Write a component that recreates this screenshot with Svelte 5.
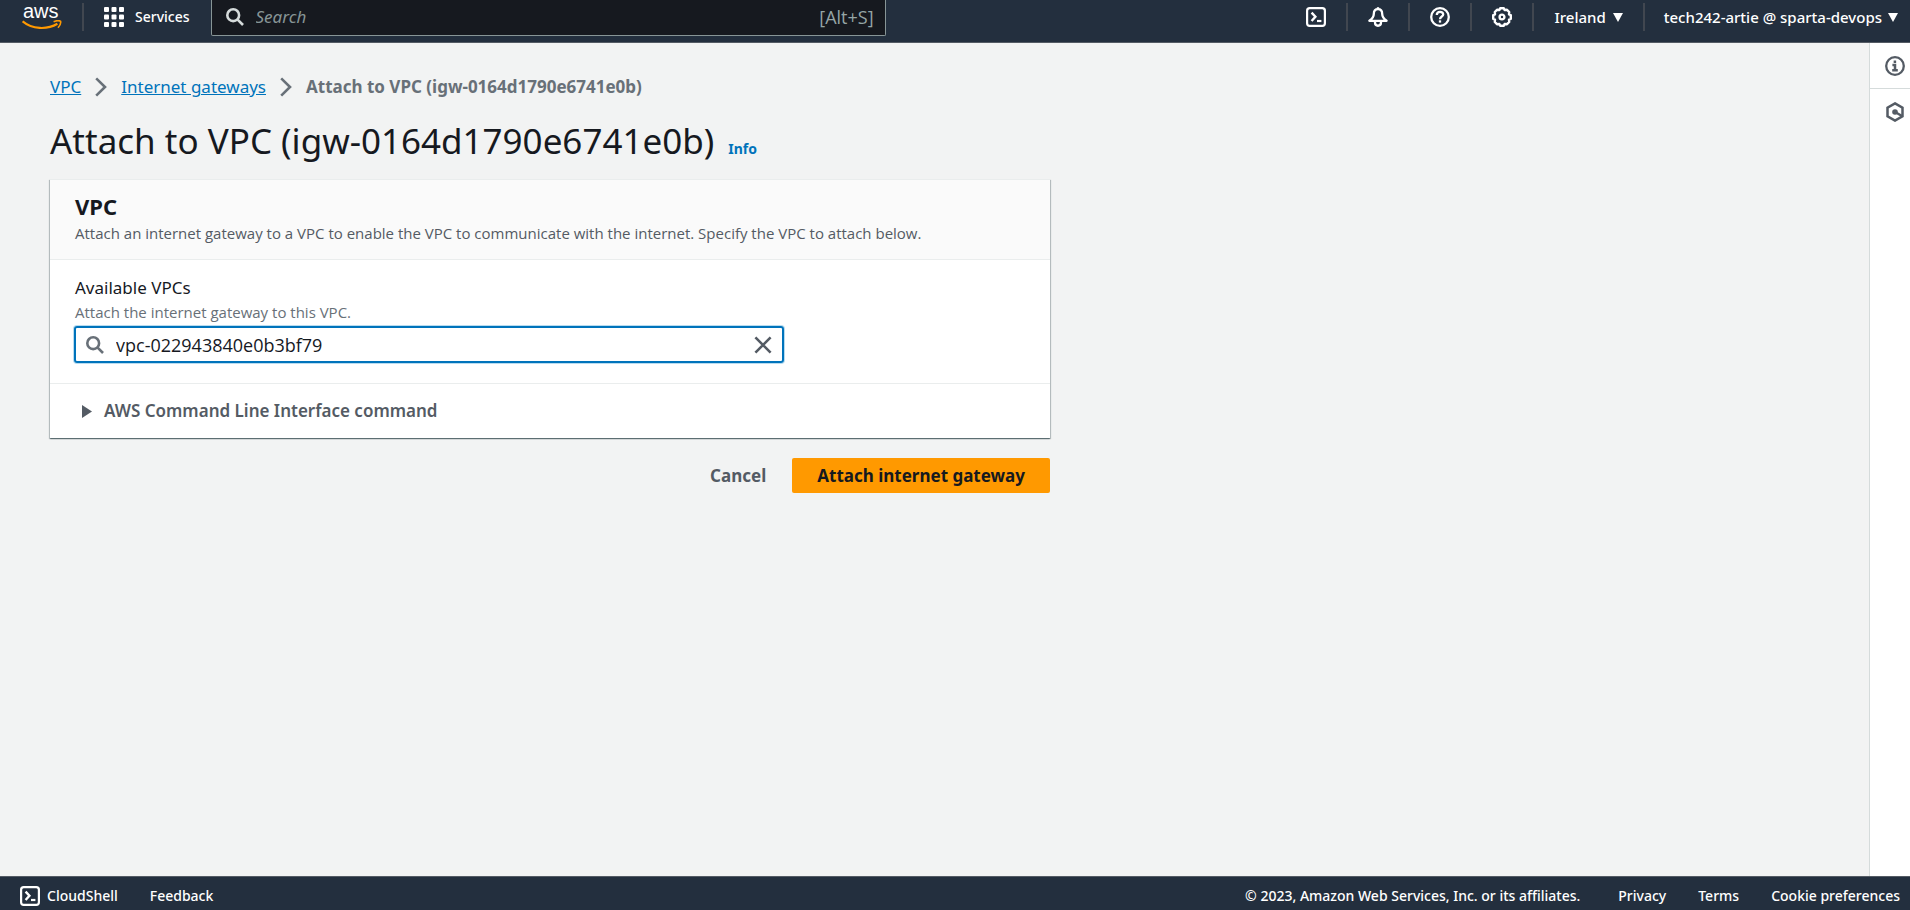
<script>
  let vpc = $state('vpc-022943840e0b3bf79');
</script>

{#snippet shell()}
  <svg class="ic" viewBox="0 0 20 20" width="20" height="20" fill="none" stroke="currentColor" stroke-width="2.2" aria-hidden="true">
    <rect x="1.1" y="1.1" width="17.8" height="17.8" rx="2.6" />
    <path d="M5.6 5.6 L9.4 9.8 L5.6 14" stroke-width="2.4" />
    <path d="M11 14 H15.4" />
  </svg>
{/snippet}

{#snippet lens()}
  <svg class="ic" viewBox="0 0 18 18" width="18" height="18" fill="none" stroke="currentColor" stroke-width="2.6" aria-hidden="true">
    <circle cx="7.2" cy="7.2" r="5.9" />
    <path d="M11.4 11.4 L17 17" />
  </svg>
{/snippet}

{#snippet chevron()}
  <svg class="ic" viewBox="0 0 12 20" width="12" height="20" fill="none" stroke="#687078" stroke-width="2.6" aria-hidden="true">
    <path d="M1.2 1.4 L10 10 L1.2 18.6" />
  </svg>
{/snippet}

{#snippet caret()}
  <svg class="ic" viewBox="0 0 10 9" width="10" height="9" fill="currentColor" aria-hidden="true"><path d="M0 0 H10 L5 9 Z" /></svg>
{/snippet}

<div class="page">
  <header>
    <a class="logo" href="#home" aria-label="AWS home">
      <span>aws</span>
      <svg viewBox="0 0 40 10" width="40" height="10" fill="none" stroke="#f90" aria-hidden="true">
        <path d="M0.6 1.4 C10 9.4 25 10 35.4 3.8" stroke-width="2.2" />
        <path d="M31.6 1.7 C34.4 0.5 37.6 0.6 38.6 1.3 C39 2.8 38 5.6 36 7.8" stroke-width="1.6" />
      </svg>
    </a>
    <button class="services">
      <svg viewBox="0 0 20 20" width="20" height="20" fill="#fff" aria-hidden="true">
        {#each [0, 7.5, 15] as y}
          {#each [0, 7.5, 15] as x}
            <rect {x} {y} width="5" height="5" rx="1" />
          {/each}
        {/each}
      </svg>
      Services
    </button>
    <label class="search">
      {@render lens()}
      <input type="search" placeholder="Search" aria-label="Search" />
      <kbd>[Alt+S]</kbd>
    </label>
    <nav class="tools" aria-label="Account tools">
      <button aria-label="CloudShell">{@render shell()}</button>
      <button aria-label="Notifications">
        <svg class="ic" viewBox="0 0 20 20" width="20" height="20" fill="none" stroke="currentColor" stroke-width="2.3" stroke-linejoin="round" aria-hidden="true">
          <path d="M10 0.2 V3" />
          <path d="M10 2.2 C7 2.2 5.8 4.6 5.8 7 C5.8 10 4.2 11.8 1.4 13.8 H18.6 C15.8 11.8 14.2 10 14.2 7 C14.2 4.6 13 2.2 10 2.2 Z" />
          <path d="M7 14 V15.6 C7 19.8 13 19.8 13 15.6 V14" />
        </svg>
      </button>
      <button aria-label="Help">
        <svg class="ic" viewBox="0 0 20 20" width="20" height="20" fill="none" stroke="currentColor" stroke-width="2.3" aria-hidden="true">
          <circle cx="10" cy="10" r="8.8" />
          <path d="M6.8 8 C6.8 3.9 13.2 3.9 13.2 7.5 C13.2 9.6 10 9.4 10 12.2" />
          <path d="M10 13.3 V15.6" />
        </svg>
      </button>
      <button aria-label="Settings">
        <svg class="ic" viewBox="0 0 20 20" width="20" height="20" fill="none" stroke="currentColor" stroke-width="2.4" stroke-linejoin="round" aria-hidden="true">
          <path d="M8.2 1.2 H11.8 L12.6 3 L15 2.8 L17.2 5 L17 7.4 L18.8 8.2 V11.8 L17 12.6 L17.2 15 L15 17.2 L12.6 17 L11.8 18.8 H8.2 L7.4 17 L5 17.2 L2.8 15 L3 12.6 L1.2 11.8 V8.2 L3 7.4 L2.8 5 L5 2.8 L7.4 3 Z" />
          <circle cx="10" cy="10" r="2.4" />
        </svg>
      </button>
      <button class="menu">Ireland {@render caret()}</button>
      <button class="menu">tech242-artie @ sparta-devops {@render caret()}</button>
    </nav>
  </header>

  <div class="body">
    <main>
      <nav class="crumbs" aria-label="Breadcrumbs">
        <a href="#vpc">VPC</a>
        {@render chevron()}
        <a href="#gateways">Internet gateways</a>
        {@render chevron()}
        <strong>Attach to VPC (igw-0164d1790e6741e0b)</strong>
      </nav>
      <div class="title">
        <h1>Attach to VPC (igw-0164d1790e6741e0b)</h1>
        <a href="#info">Info</a>
      </div>

      <form class="form" onsubmit={(e) => e.preventDefault()}>
        <section class="card">
          <div class="head">
            <h2>VPC</h2>
            <p>Attach an internet gateway to a VPC to enable the VPC to communicate with the internet. Specify the VPC to attach below.</p>
          </div>
          <div class="field">
            <label for="vpc">Available VPCs</label>
            <p id="vpc-hint">Attach the internet gateway to this VPC.</p>
            <div class="box">
              {@render lens()}
              <input id="vpc" type="text" bind:value={vpc} aria-describedby="vpc-hint" />
              <button type="button" aria-label="Clear" onclick={() => (vpc = '')}>
                <svg class="ic" viewBox="0 0 18 18" width="18" height="18" fill="none" stroke="currentColor" stroke-width="2.6" aria-hidden="true">
                  <path d="M1.4 1.4 L16.6 16.6 M16.6 1.4 L1.4 16.6" />
                </svg>
              </button>
            </div>
          </div>
          <button type="button" class="expand">
            <svg class="ic" viewBox="0 0 10 13" width="10" height="13" fill="currentColor" aria-hidden="true"><path d="M0 0 L10 6.5 L0 13 Z" /></svg>
            AWS Command Line Interface command
          </button>
        </section>
        <div class="actions">
          <button type="button" class="cancel">Cancel</button>
          <button type="submit" class="primary">Attach internet gateway</button>
        </div>
      </form>
    </main>

    <aside>
      <button aria-label="Info panel">
        <svg class="ic" viewBox="0 0 20 20" width="20" height="20" fill="none" stroke="currentColor" stroke-width="2.3" aria-hidden="true">
          <circle cx="10" cy="10" r="8.8" />
          <path d="M9.9 4.6 V7 M7.4 9 H10 V14 M7.2 14.2 H12.8" stroke-width="2.5" />
        </svg>
      </button>
      <button aria-label="Diagnostics panel">
        <svg class="ic" viewBox="0 0 20 20" width="20" height="20" fill="none" stroke="currentColor" stroke-width="2.5" aria-hidden="true">
          <path d="M10 1.4 L17.5 5.7 V14.3 L10 18.6 L2.5 14.3 V5.7 Z" />
          <circle cx="10" cy="10" r="2.8" fill="currentColor" stroke="none" />
          <path d="M10 10 L17 14" />
        </svg>
      </button>
    </aside>
  </div>

  <footer>
    <button>{@render shell()} CloudShell</button>
    <a href="#feedback">Feedback</a>
    <span class="copy">© 2023, Amazon Web Services, Inc. or its affiliates.</span>
    <a href="#privacy">Privacy</a>
    <a href="#terms">Terms</a>
    <a href="#cookies">Cookie preferences</a>
  </footer>
</div>

<style>
  :global(body) { margin: 0; }
  .page {
    min-height: 100vh;
    display: flex;
    flex-direction: column;
    background: #f2f3f3;
    color: #16191f;
    font: 17px/24px "Noto Sans", sans-serif;
  }
  .page, .page :global(*) { box-sizing: border-box; }
  button, input { font: inherit; color: inherit; background: none; border: 0; padding: 0; margin: 0; outline: 0; }
  button { cursor: pointer; }
  h1, h2, p { margin: 0; }
  a { color: #0073bb; }
  .ic { flex: none; display: block; }

  header {
    height: 43px;
    display: flex;
    align-items: flex-start;
    background: #232f3e;
    border-bottom: 1px solid #545b64;
    color: #fff;
    font-size: 15px;
    font-weight: 500;
  }
  .logo {
    width: 84px;
    height: 28px;
    margin-top: 3px;
    padding-left: 22px;
    border-right: 2px solid #414750;
    color: #fff;
    text-decoration: none;
    font: 20px/16px "Liberation Sans", sans-serif;
  }
  .logo span { display: block; padding-left: 1px; }
  .logo svg { display: block; margin-top: 1px; }
  .services { display: flex; align-items: center; gap: 11px; height: 34px; padding: 0 21px 0 20px; font-size: 14px; }
  .search {
    flex: 0 1 675px;
    height: 36px;
    display: flex;
    align-items: center;
    gap: 12px;
    padding: 0 11px 2px 14px;
    background: #16191f;
    border: 1px solid #879596;
    border-top: 0;
    border-radius: 0 0 2px 2px;
    color: #d5dbdb;
    font-size: 17px;
    font-weight: 400;
  }
  .search input { flex: 1; min-width: 0; }
  .search input::placeholder { color: #879596; font-style: italic; opacity: 1; }
  .search kbd { font-family: "Open Sans", sans-serif; font-size: 18px; color: #95a5a6; }
  .tools { margin: 3px 0 0 auto; display: flex; }
  .tools button {
    height: 28px;
    width: 62px;
    display: flex;
    justify-content: center;
    align-items: center;
    border-right: 2px solid #414750;
  }
  .tools .menu { width: auto; gap: 7px; padding: 0 20px; }
  .tools .menu:last-child { border: 0; padding: 0 12px 0 19px; gap: 6px; }

  .body { flex: 1; display: flex; }
  main { flex: 1; min-width: 0; padding: 32px 50px; }
  .crumbs { display: flex; align-items: center; gap: 14px; }
  .crumbs strong { color: #687078; }
  .title { display: flex; align-items: baseline; gap: 14px; margin-top: 20px; }
  h1 { font-size: 35px; line-height: 44px; font-weight: 400; }
  .title a { font-size: 14px; font-weight: 700; text-decoration: none; }
  .form { max-width: 1000px; margin-top: 16px; }
  .card {
    background: #fff;
    border-top: 1px solid #eaeded;
    box-shadow: 0 1px 1px 0 rgba(0, 28, 36, 0.4), 1px 1px 1px 0 rgba(0, 28, 36, 0.2), -1px 1px 1px 0 rgba(0, 28, 36, 0.2);
  }
  .head { padding: 12px 25px 14px; background: #fafafa; border-bottom: 1px solid #eaeded; }
  h2 { font-size: 22px; line-height: 28px; font-weight: 700; }
  .head p, .field p { font-family: "Open Sans", sans-serif; font-size: 15px; }
  .head p { margin-top: 1px; color: #545b64; }
  .field { padding: 16px 25px 20px; border-bottom: 1px solid #eaeded; }
  .field label { display: block; }
  .field p { color: #687078; }
  .box {
    display: flex;
    align-items: center;
    gap: 12px;
    width: 75%;
    max-width: 710px;
    height: 37px;
    margin: 2px 0 0 -1px;
    padding: 0 10px;
    border: 2px solid #0073bb;
    border-radius: 3px;
    box-shadow: 0 0 0 1px #b8dcf0;
    color: #687078;
  }
  .box input { flex: 1; min-width: 0; color: #16191f; font-family: "Open Sans", sans-serif; font-size: 18px; }
  .box button { color: #545b64; }
  .expand { display: flex; align-items: center; gap: 12px; width: 100%; height: 54px; padding: 0 32px; font-weight: 600; color: #545b64; }
  .actions { display: flex; justify-content: flex-end; gap: 26px; margin-top: 20px; }
  .actions button { height: 35px; font-weight: 700; }
  .cancel { color: #545b64; }
  .actions .primary { padding: 0 25px; background: #f90; border-radius: 2px; }

  aside { width: 41px; background: #fff; border-left: 1px solid #d5dbdb; color: #545b64; }
  aside button { width: 100%; height: 46px; display: flex; align-items: center; padding-left: 15px; }
  aside button:first-child { border-bottom: 1px solid #d5dbdb; }

  footer {
    height: 34px;
    display: flex;
    align-items: center;
    gap: 32px;
    padding: 4px 10px 0 20px;
    background: #232f3e;
    border-top: 1px solid #545b64;
    color: #fff;
    font-size: 14px;
    font-weight: 500;
  }
  footer button { display: flex; align-items: center; gap: 7px; }
  footer a { color: #fff; text-decoration: none; }
  .copy { margin: 0 6px 0 auto; }
</style>
